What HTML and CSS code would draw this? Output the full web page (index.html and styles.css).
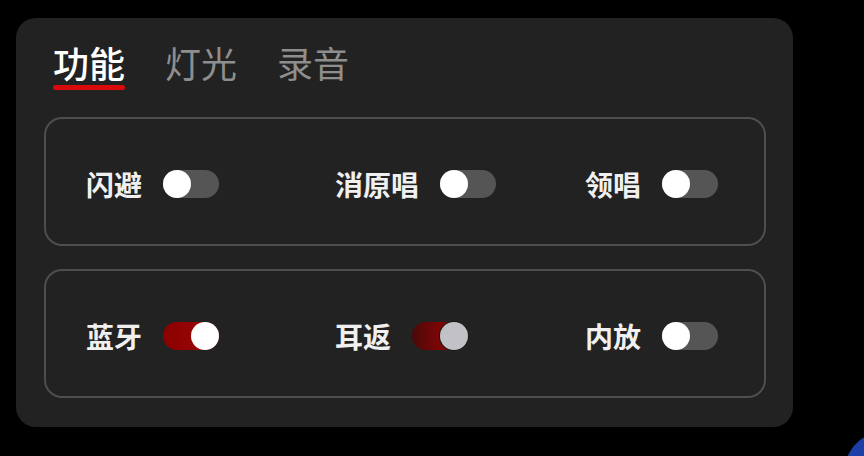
FILE: index.html
```html
<!DOCTYPE html>
<html lang="zh">
<head>
<meta charset="utf-8">
<link rel="stylesheet" href="styles.css">
</head>
<body>
<div class="panel">
  <div class="tabs">
    <div class="tab active">功能</div>
    <div class="tab">灯光</div>
    <div class="tab">录音</div>
  </div>
  <div class="group">
    <div class="item"><span class="label">闪避</span><span class="switch"><span class="knob"></span></span></div>
    <div class="item"><span class="label">消原唱</span><span class="switch"><span class="knob"></span></span></div>
    <div class="item"><span class="label">领唱</span><span class="switch"><span class="knob"></span></span></div>
  </div>
  <div class="group">
    <div class="item"><span class="label">蓝牙</span><span class="switch on"><span class="knob"></span></span></div>
    <div class="item"><span class="label">耳返</span><span class="switch on disabled"><span class="knob"></span></span></div>
    <div class="item"><span class="label">内放</span><span class="switch"><span class="knob"></span></span></div>
  </div>
</div>
</body>
</html>
```
FILE: styles.css
```css
html, body {
  margin: 0;
  padding: 0;
  width: 864px;
  height: 456px;
  overflow: hidden;
  font-family: "Noto Sans CJK SC", "Noto Sans", sans-serif;
}
html {
  background: radial-gradient(circle at 885px 472px, #1b3ea8 0, #1b3ea8 40px, #000 41px) #000;
}
body {
  padding-top: 18px;
  padding-left: 16px;
  box-sizing: border-box;
}
.panel {
  width: 777px;
  height: 409px;
  box-sizing: border-box;
  background: #222222;
  border-radius: 20px;
  padding: 22px 27px 0 28px;
}
.tabs {
  display: flex;
  gap: 40px;
  padding-left: 9px;
  height: 77px;
}
.tab {
  font-size: 36px;
  line-height: 44px;
  color: #8e8e8e;
  position: relative;
  height: 44px;
}
.tab.active {
  color: #ffffff;
  font-weight: 500;
}
.tab.active::after {
  content: "";
  position: absolute;
  left: 0;
  right: 0;
  top: 45px;
  height: 5px;
  border-radius: 3px;
  background: #d80a0a;
}
.group {
  height: 129px;
  box-sizing: border-box;
  border: 2px solid #4e4e4e;
  border-radius: 18px;
  display: grid;
  grid-template-columns: 249px 250px 1fr;
  align-items: center;
  padding-left: 40px;
  padding-top: 4px;
  margin-bottom: 23px;
}
.group:last-child {
  margin-bottom: 0;
}
.item {
  display: flex;
  align-items: center;
  gap: 21px;
}
.label {
  color: #f0f0f0;
  font-size: 28px;
  font-weight: 700;
  line-height: 30px;
}
.switch {
  width: 56px;
  height: 28px;
  border-radius: 14px;
  background: #555555;
  display: flex;
  align-items: center;
}
.switch.on {
  background: linear-gradient(90deg, #8a0000, #a00808);
  justify-content: flex-end;
}
.switch.on.disabled {
  background: linear-gradient(90deg, #4a0808 0%, #7a0606 45%, #6a0a0a 100%);
}
.knob {
  width: 28px;
  height: 28px;
  border-radius: 50%;
  background: #ffffff;
}
.disabled .knob {
  background: #c2c2c6;
  box-shadow: 0 0 0 1px #1a1a1a;
}
```
